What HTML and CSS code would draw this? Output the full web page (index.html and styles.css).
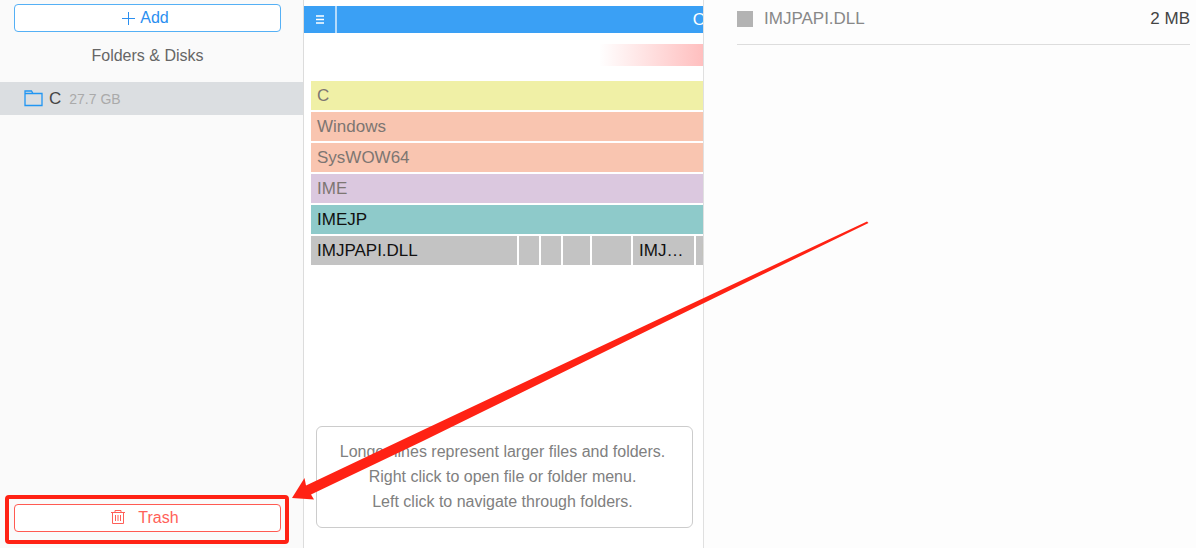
FILE: index.html
```html
<!DOCTYPE html>
<html lang="en">
  <head>
    <meta charset="UTF-8" />
    <meta name="viewport" content="width=device-width, initial-scale=1.0" />
    <title>Folders &amp; Disks</title>
    <link rel="stylesheet" href="styles.css">
  </head>
  <body>
    <div class="app">
      <aside class="sidebar">
        <button type="button" class="btn add">
          <svg width="13" height="13" viewBox="0 0 13 13"><path d="M6.500 0v13M0 6.500h13" /></svg>
          Add
        </button>
        <h2>Folders &amp; Disks</h2>
        <a href="#" class="disk">
          <svg width="19" height="17" viewBox="0 0 19 17"><path stroke-width="1.3" d="M1 15.500V1h6.500l1.500 2.500h9v12zM1 3.500h8" /></svg>
          <span class="disk-name">C</span>
          <span class="disk-size">27.7 GB</span>
        </a>
        <div class="highlight">
          <button type="button" class="btn trash">
            <svg width="14" height="16" viewBox="0 0 14 16"><path d="M0 3.500h14M4 3.500V1.500h6v2M1.500 3.500v11h11v-11M4.500 6v6M7 6v6M9.500 6v6" /></svg>
            Trash
          </button>
        </div>
      </aside>

      <main class="map">
        <div class="toolbar">
          <button type="button" class="menu" aria-label="Menu">
            <svg width="8" height="9" viewBox="0 0 8 9"><path stroke-width="1.600" d="M0 1h8M0 4.500h8M0 8h8" /></svg>
          </button>
          <div class="title">O</div>
        </div>
        <div class="fade"></div>
        <div class="rows">
          <div class="bar yellow">C</div>
          <div class="bar orange">Windows</div>
          <div class="bar orange">SysWOW64</div>
          <div class="bar purple">IME</div>
          <div class="bar teal">IMEJP</div>
          <div class="files">
            <div class="bar file" style="width: 206px">IMJPAPI.DLL</div>
            <div class="bar file" style="width: 20px"></div>
            <div class="bar file" style="width: 20px"></div>
            <div class="bar file" style="width: 27px"></div>
            <div class="bar file" style="width: 39px"></div>
            <div class="bar file" style="width: 61px">IMJ…</div>
            <div class="bar file" style="width: 40px">I</div>
          </div>
        </div>
        <div class="hint">
          <p>Longer lines represent larger files and folders.</p>
          <p>Right click to open file or folder menu.</p>
          <p>Left click to navigate through folders.</p>
        </div>
      </main>

      <section class="details">
        <div class="item">
          <span class="swatch"></span>
          <span class="item-name">IMJPAPI.DLL</span>
          <span class="item-size">2 MB</span>
        </div>
      </section>

      <!-- arrow pointing at the trash button -->
      <svg class="arrow" width="580" height="282" viewBox="290 220 580 282">
        <path d="M292 498L304.500 478L306 485.500L423 430L660 318.500L867 221.500L868.500 223L660 324.500L423 441L311 494.500L314 499.500Z" />
      </svg>
    </div>
  </body>
</html>
```

FILE: styles.css
```css
* {
  margin: 0;
  padding: 0;
  box-sizing: border-box;
}
body {
  min-height: 100vh;
  display: flex;
  padding-bottom: 3px;
  background-color: #fff;
  font-family: "Liberation Sans", Arial, sans-serif;
  font-size: 17px;
}
button {
  font-family: inherit;
  cursor: pointer;
}
svg {
  fill: none;
  stroke: currentColor;
}
.app {
  flex: 1;
  position: relative;
  display: grid;
  grid-template-columns: 304px 400px 1fr;
}

/* left column */
.sidebar {
  display: flex;
  flex-direction: column;
  padding-top: 4px;
  background-color: #fafafa;
  border-right: 1px solid #dcdcdc;
}
.btn {
  display: flex;
  align-items: center;
  justify-content: center;
  height: 28px;
  background-color: #fff;
  border: 1px solid;
  border-radius: 4px;
  font-size: 16px;
}
.add {
  gap: 5px;
  margin: 0 22px 0 14px;
  padding-right: 4px;
  border-color: #55b0f5;
  color: #2b8ff0;
}
.sidebar h2 {
  margin: 14px 8px 17px 0;
  color: #666;
  font-size: 16px;
  font-weight: normal;
  line-height: 19px;
  text-align: center;
}
.disk {
  display: flex;
  align-items: center;
  height: 33px;
  padding-left: 24px;
  background-color: #dbdee1;
  text-decoration: none;
}
.disk svg {
  color: #2196f3;
}
.disk-name {
  margin: 0 8px 0 6px;
  color: #444;
}
.disk-size {
  color: #aaa;
  font-size: 14px;
}
.highlight {
  margin: auto 14px 4px 5px;
  padding: 5px 4px 8px 5px;
  border: 4px solid #ff2214;
  border-radius: 4px;
}
.trash {
  width: 100%;
  gap: 13px;
  padding-right: 5px;
  border-color: #ff5a52;
  color: #ff5f58;
}
.trash svg {
  margin-bottom: 2px;
}

/* folder map */
.map {
  display: flex;
  flex-direction: column;
  padding-top: 6px;
  overflow: hidden;
  border-right: 1px solid #e0e0e0;
}
.toolbar {
  display: flex;
  gap: 2px;
  height: 27px;
  margin-right: -3px;
  background-color: #b5dbfb;
  color: #fff;
}
.menu {
  width: 31px;
  background-color: #3aa0f5;
  border: none;
  color: #fff;
}
.menu svg {
  display: block;
  margin: auto;
}
.title {
  flex: 1;
  background-color: #3aa0f5;
  line-height: 27px;
  text-align: right;
}
.fade {
  width: 104px;
  height: 22px;
  margin: 11px 0 15px auto;
  background: linear-gradient(to right, #fff, #ffbfbf);
}
.rows {
  display: flex;
  flex-direction: column;
  gap: 2px;
  padding-left: 7px;
}
.bar {
  height: 29px;
  padding-left: 6px;
  line-height: 29px;
  color: #111;
}
.yellow,
.orange,
.purple {
  color: #7d7672;
}
.yellow {
  background-color: #f0f0a6;
}
.orange {
  background-color: #f9c5b0;
}
.purple {
  background-color: #dbc8df;
}
.teal {
  background-color: #8ecaca;
}
.files {
  display: flex;
  gap: 2px;
}
.file {
  flex-shrink: 0;
  background-color: #c3c3c3;
}
.hint {
  margin: auto 10px 20px 12px;
  padding: 12px 4px 13px 0;
  border: 1px solid #ccc;
  border-radius: 6px;
  color: #808080;
  font-size: 16px;
  line-height: 25px;
  text-align: center;
}

/* right column */
.details {
  padding: 0 6px 0 33px;
  background-color: #fdfdfd;
}
.item {
  display: flex;
  align-items: center;
  height: 45px;
  padding-bottom: 6px;
  border-bottom: 1px solid #ddd;
}
.swatch {
  width: 16px;
  height: 16px;
  margin-right: 11px;
  background-color: #b3b3b3;
}
.item-name {
  color: #888;
}
.item-size {
  margin-left: auto;
  color: #444;
}

.arrow {
  position: absolute;
  left: 290px;
  top: 220px;
  pointer-events: none;
}
.arrow path {
  fill: #ff2214;
  stroke: none;
}
```
